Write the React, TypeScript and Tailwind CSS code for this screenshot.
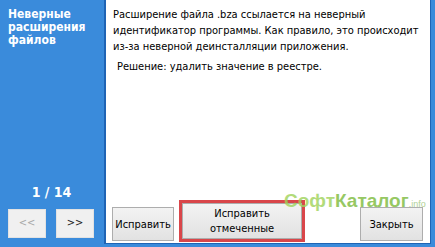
const font = { fontFamily: '"DejaVu Sans Condensed", "Liberation Sans", Tahoma, sans-serif' };

function NavButton({ label, disabled }: { label: string; disabled?: boolean }) {
  return (
    <button
      type="button"
      className={`w-[38px] h-[29px] bg-[#f0f0f0] border border-[#e2e2e2] text-[11px] ${disabled ? 'text-[#a8a8a8]' : 'text-[#222]'}`}
    >
      {label}
    </button>
  );
}

function ActionButton({ children, className = '' }: { children: React.ReactNode; className?: string }) {
  return (
    <button
      type="button"
      className={`h-[34px] border border-[#adadad] bg-gradient-to-b from-[#f3f3f3] to-[#e2e2e2] text-[11px] leading-[15px] text-black ${className}`}
    >
      {children}
    </button>
  );
}

export default function App() {
  return (
    <div className="w-[435px] h-[247px] bg-[#3a8bdb] flex overflow-hidden" style={font}>
      {/* левая панель */}
      <aside className="w-[104px] shrink-0 flex flex-col px-[8px] pt-[8px] pb-[9px]">
        <h2 className="text-white font-bold text-[12px] leading-[13px]">
          Неверные
          <br />
          расширения
          <br />
          файлов
        </h2>
        <div className="mt-auto text-center text-white font-bold text-[14px] leading-[16px] pr-[1px]">1 / 14</div>
        <div className="flex gap-[10px] mt-[9px]">
          <NavButton label="<<" disabled />
          <NavButton label=">>" />
        </div>
      </aside>

      {/* содержимое */}
      <section className="relative w-[327px] h-[244px] bg-white border-l-[2px] border-r border-b border-l-[#1f64b4] border-r-[#1f64b4] border-b-[#1f64b4] flex flex-col">
        <div className="pl-[7px] pt-[7px] text-[11px] leading-[16px] text-black">
          <p>
            Расширение файла .bza ссылается на неверный
            <br />
            идентификатор программы. Как правило, это происходит
            <br />
            из-за неверной деинсталляции приложения.
          </p>
          <p className="mt-[4px] pl-[4px]">Решение: удалить значение в реестре.</p>
        </div>

        <div className="mt-auto flex items-end pl-[6px] pr-[7px] pb-[1px]">
          <ActionButton className="w-[62px] mb-[1px]">Исправить</ActionButton>
          <div className="ml-[5px] border-[3px] border-[#d9464a] p-0">
            <ActionButton className="w-[120px] h-[36px]">
              Исправить
              <br />
              отмеченные
            </ActionButton>
          </div>
          <ActionButton className="ml-auto w-[63px] mb-[1px]">Закрыть</ActionButton>
        </div>

        {/* водяной знак */}
        <div
          className="absolute left-[178px] top-[190px] flex items-baseline font-bold text-[19px] leading-[22px] pointer-events-none opacity-80"
          style={{ fontFamily: '"Liberation Sans", sans-serif' }}
        >
          <span className="text-[#9fd35a]">Софт</span>
          <span className="text-[#7dbb3d]">Каталог</span>
          <span className="text-[9px] font-normal text-[#9cc77a]">.info</span>
        </div>
      </section>
    </div>
  );
}
